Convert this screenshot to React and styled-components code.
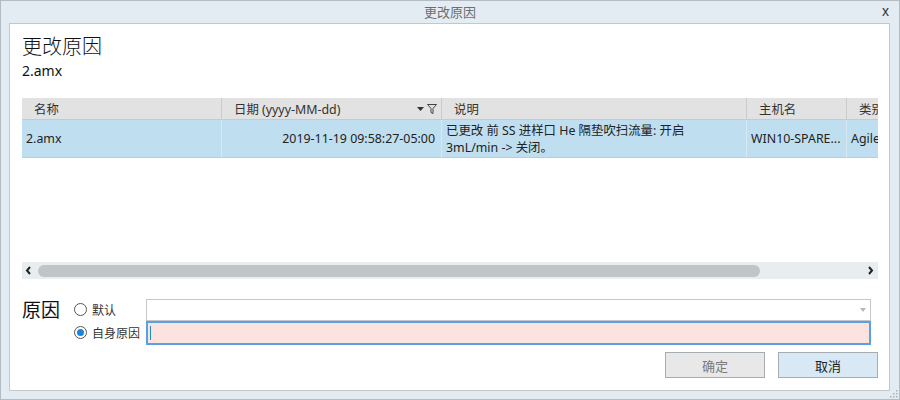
import styled, { createGlobalStyle } from 'styled-components'

// Boîte de dialogue "更改原因" : barre de titre, tableau des modifications, choix de la raison

const Global = createGlobalStyle`
  html, body { margin: 0; padding: 0; background: #fff; }
  body {
    font-family: 'Segoe UI', 'Noto Sans', 'Noto Sans CJK SC', sans-serif;
    color: #222;
  }
  * { box-sizing: border-box; }
`

const Window = styled.div`
  width: 900px;
  height: 400px;
  background: #e3ecf3;
  border: 1px solid #b4bcc3;
  display: flex;
  flex-direction: column;
  position: relative;
`

const TitleBar = styled.div`
  height: 23px;
  display: flex;
  align-items: center;
  justify-content: center;
  position: relative;
  font-size: 13px;
  color: #6e6e6e;
  font-family: 'Noto Sans CJK SC', sans-serif;
  padding-bottom: 2px;
`

const Close = styled.span`
  position: absolute;
  right: 10px;
  top: 2px;
  font-size: 14px;
  color: #333;
  font-family: 'Liberation Sans', sans-serif;
`

const Panel = styled.div`
  flex: 1;
  margin: 0 9px 8px 8px;
  background: #fff;
  border: 1px solid #c3c8cc;
  padding: 8px 10px 12px 12px;
  display: flex;
  flex-direction: column;
`

const Heading = styled.h1`
  margin: 0;
  font-size: 20px;
  font-weight: 300;
  line-height: 28px;
  color: #111;
  font-family: 'Noto Sans CJK SC', sans-serif;
`

const FileName = styled.div`
  font-size: 14px;
  line-height: 20px;
  color: #111;
  margin-top: 1px;
  margin-bottom: 17px;
`

const TableBox = styled.div`
  height: 181px;
  width: 856px;
  display: flex;
  flex-direction: column;
  overflow: hidden;
`

const Grid = styled.div`
  flex: 1;
  display: grid;
  grid-template-columns: 200px 220px 305px 100px 100px;
  grid-template-rows: 22px 38px;
  align-content: start;
  font-size: 12.4px;
`

const Head = styled.div`
  background: #e2e2e2;
  border-right: 1px solid #cbcbcb;
  border-bottom: 1px solid #c9c9c9;
  display: flex;
  align-items: center;
  padding-left: 12px;
  padding-right: 4px;
  color: #333;
  white-space: nowrap;
  justify-content: space-between;
`

const Cell = styled.div`
  background: #bfdff0;
  border-right: 1px solid #d8e9f3;
  border-bottom: 1px solid #c5c9cc;
  display: flex;
  align-items: center;
  padding: 0 ${p => (p.$right ? '6px' : '3px')} 0 4px;
  justify-content: ${p => (p.$right ? 'flex-end' : 'flex-start')};
  color: #222;
  line-height: 17px;
  white-space: ${p => (p.$wrap ? 'normal' : 'nowrap')};
  overflow: hidden;
`

const Icons = styled.span`
  display: flex;
  align-items: center;
  gap: 3px;
`

const ScrollBar = styled.div`
  height: 17px;
  background: #e8edf0;
  display: flex;
  align-items: center;
  padding: 0 4px 0 3px;
  gap: 6px;
`

const Track = styled.div`
  flex: 1;
  height: 12px;
  display: flex;
`

const Thumb = styled.div`
  width: 722px;
  height: 12px;
  border-radius: 6px;
  background: #c0c5c8;
`

const ReasonArea = styled.div`
  margin-top: 19px;
  display: grid;
  grid-template-columns: 52px 72px 725px;
  grid-template-rows: 23px 23px;
  align-items: center;
`

const ReasonLabel = styled.div`
  font-size: 19px;
  font-family: 'Noto Sans CJK SC', sans-serif;
  color: #111;
  align-self: start;
  line-height: 22px;
`

const Option = styled.label`
  display: flex;
  align-items: center;
  gap: 5px;
  font-size: 12px;
  color: #333;
  font-family: 'Noto Sans CJK SC', sans-serif;
  grid-column: 2;
`

const Radio = styled.span`
  width: 13px;
  height: 13px;
  border-radius: 50%;
  border: 1px solid #555;
  background: #fff;
  display: flex;
  align-items: center;
  justify-content: center;
  &::after {
    content: '';
    width: 7px;
    height: 7px;
    border-radius: 50%;
    background: ${p => (p.$on ? '#1b84dc' : 'transparent')};
  }
`

const Select = styled.div`
  grid-column: 3;
  height: 22px;
  border: 1px solid #c4c8cc;
  background: #fff;
  display: flex;
  align-items: center;
  justify-content: flex-end;
  padding-right: 4px;
`

const Input = styled.div`
  grid-column: 3;
  height: 24px;
  border: 2px solid #5aa0e2;
  background: #fde3e0;
  display: flex;
  align-items: center;
  padding-left: 2px;
  &::before {
    content: '';
    width: 1px;
    height: 14px;
    background: #1a8fc0;
  }
`

const Buttons = styled.div`
  display: flex;
  justify-content: flex-end;
  gap: 13px;
  margin-top: 8px;
  padding-right: 1px;
`

const Button = styled.button`
  width: 100px;
  height: 26px;
  border: 1px solid #a6adb2;
  background: ${p => (p.$disabled ? '#e8e8e8' : '#d8e8f4')};
  color: ${p => (p.$disabled ? '#7a7a7a' : '#222')};
  font-size: 13px;
  font-family: 'Noto Sans CJK SC', sans-serif;
  padding: 0;
`

const Grip = styled.svg`
  position: absolute;
  right: 1px;
  bottom: 1px;
`

function Chevron({ dir }) {
  const d = dir === 'left' ? 'M5 1 L2 4.5 L5 8' : 'M2 1 L5 4.5 L2 8'
  return (
    <svg width="7" height="9" viewBox="0 0 7 9">
      <path d={d} fill="none" stroke="#222" strokeWidth="2" />
    </svg>
  )
}

function HeadIcons() {
  return (
    <Icons>
      <svg width="7" height="4" viewBox="0 0 7 4"><path d="M0 0 H7 L3.5 4 Z" fill="#333" /></svg>
      <svg width="10" height="10" viewBox="0 0 10 10">
        <path d="M0.5 0.5 H9.5 L6 4.5 V9.5 L4 8.5 V4.5 Z" fill="none" stroke="#444" strokeWidth="1" />
      </svg>
    </Icons>
  )
}

export default function App() {
  return (
    <>
      <Global />
      <Window>
        <TitleBar>
          更改原因
          <Close>x</Close>
        </TitleBar>
        <Panel>
          <Heading>更改原因</Heading>
          <FileName>2.amx</FileName>
          <TableBox>
            <Grid>
              <Head>名称</Head>
              <Head>日期 (yyyy-MM-dd)<HeadIcons /></Head>
              <Head>说明</Head>
              <Head>主机名</Head>
              <Head>类别</Head>
              <Cell>2.amx</Cell>
              <Cell $right>2019-11-19 09:58:27-05:00</Cell>
              <Cell $wrap>
                <span>已更改 前 SS 进样口 He 隔垫吹扫流量: 开启<br />3mL/min -&gt; 关闭。</span>
              </Cell>
              <Cell>WIN10-SPARE...</Cell>
              <Cell>Agilent</Cell>
            </Grid>
            <ScrollBar>
              <Chevron dir="left" />
              <Track><Thumb /></Track>
              <Chevron dir="right" />
            </ScrollBar>
          </TableBox>
          <ReasonArea>
            <ReasonLabel>原因</ReasonLabel>
            <Option><Radio />默认</Option>
            <Select>
              <svg width="6" height="4" viewBox="0 0 6 4"><path d="M0 0 H6 L3 4 Z" fill="#b5b9bc" /></svg>
            </Select>
            <Option><Radio $on />自身原因</Option>
            <Input />
          </ReasonArea>
          <Buttons>
            <Button $disabled>确定</Button>
            <Button>取消</Button>
          </Buttons>
        </Panel>
        <Grip width="8" height="8" viewBox="0 0 8 8">
          {[[6, 0], [6, 3], [3, 3], [6, 6], [3, 6], [0, 6]].map(([x, y]) => (
            <rect key={`${x}-${y}`} x={x} y={y} width="1.5" height="1.5" fill="#a9b2b8" />
          ))}
        </Grip>
      </Window>
    </>
  )
}
